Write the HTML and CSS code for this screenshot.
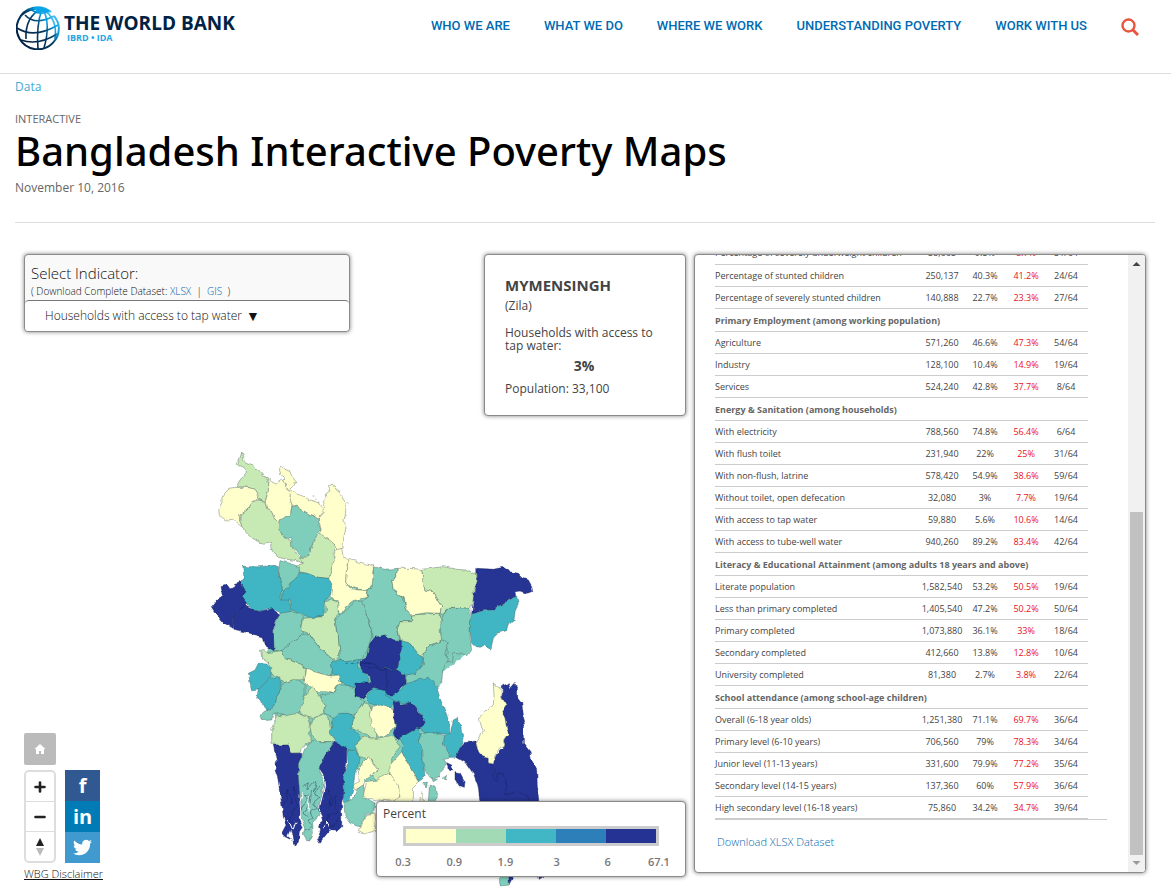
FILE: index.html
```html
<!DOCTYPE html>
<html lang="en">
<head>
<meta charset="utf-8">
<title>Bangladesh Interactive Poverty Maps</title>
<link rel="stylesheet" href="styles.css">
</head>
<body>
<header class="site-header">
  <a class="brand" href="#">
    <svg class="globe" viewBox="0 0 44 44" width="44" height="44" aria-hidden="true">
      <defs><linearGradient id="ink" x1="0.1" y1="0.8" x2="0.9" y2="0.1"><stop offset="0" stop-color="#002244"/><stop offset=".5" stop-color="#063c63"/><stop offset=".72" stop-color="#0099dc"/><stop offset="1" stop-color="#5cc8f5"/></linearGradient></defs>
      <g fill="none" stroke="url(#ink)" stroke-width="1.6">
        <path stroke-width="2" d="M35 6A21 21 0 1 0 42.500 19M38 10Q43 16 43 23"/>
        <path d="M25 3Q9 11 10 33M26 3Q20 20 22 43M27 3Q35 18 28 42M27 3Q42 13 39 33M25 3Q14 2 6 9"/>
        <path d="M9 9Q19 20 38 10M1 22Q18 33 42 19M5 34Q22 40 41 28M14 3Q24 10 35 5"/>
      </g>
      <path d="M17 2Q26-1 34 5Q30 8 26 6Q21 7 17 2z" fill="#0aa5e8"/>
    </svg>
    <span class="brand-text"><span class="brand-name">THE WORLD BANK</span><span class="brand-sub">IBRD • IDA</span></span>
  </a>
  <nav class="main-nav" aria-label="Main">
    <a href="#">WHO WE ARE</a><a href="#">WHAT WE DO</a><a href="#">WHERE WE WORK</a><a href="#">UNDERSTANDING POVERTY</a><a href="#">WORK WITH US</a>
    <button class="search" aria-label="Search"><svg viewBox="0 0 18 18" width="18" height="18" fill="none" stroke="#e8543c" stroke-width="2.4"><circle cx="7.500" cy="7.500" r="6"/><path stroke-width="3" d="M12 12l5 5"/></svg></button>
  </nav>
</header>
<main>
  <section class="title-block">
    <a class="crumb" href="#">Data</a>
    <p class="kicker">INTERACTIVE</p>
    <h1>Bangladesh Interactive Poverty Maps</h1>
    <p class="date">November 10, 2016</p>
  </section>
  <section class="dashboard">
    <div class="stage">
      <svg class="map" viewBox="-120 0 1170 1350" width="390" height="450" role="img" aria-label="Map of Bangladesh zilas">
        <defs><filter id="rough" x="-5%" y="-5%" width="110%" height="110%"><feTurbulence type="fractalNoise" baseFrequency="0.06" numOctaves="1" seed="4" result="n"/><feDisplacementMap in="SourceGraphic" in2="n" scale="15" xChannelSelector="R" yChannelSelector="G"/></filter></defs>
        <g filter="url(#rough)">
          <path class="t flat" d="M240 370L520 390L800 400L800 640L690 730L720 860L650 1000L500 1030L440 940L230 900L200 640L240 520z"/>
          <g>
            <path class="g" d="M125 38L131 50L131 62L145 70L160 78L165 88L178 90L187 98L190 108L200 112L207 135L205 155L195 184L175 180L168 170L173 160L165 148L150 143L130 140L108 142L120 120L133 105L140 95L132 82L112 76L118 60z"/>
            <path class="y" d="M108 142L150 143L165 148L173 160L168 178L155 186L148 204L135 215L120 225L118 240L128 262L112 250L100 240L85 243L70 236L58 225L56 208L66 190L66 172L78 155L90 145z"/>
            <path class="g" d="M175 180L195 184L200 205L215 215L225 238L238 248L240 265L250 290L270 300L285 330L310 370L290 362L260 358L235 352L222 340L212 325L213 305L190 310L175 305L150 290L132 270L120 245L120 225L135 215L148 204L155 186z"/>
            <path class="y" d="M207 118L215 125L228 132L245 120L256 132L262 150L272 155L270 175L276 195L272 225L255 232L240 250L225 238L215 215L200 205L196 184L205 155z"/>
            <path class="y" d="M235 90L245 78L252 88L270 95L275 108L288 125L280 140L272 148L290 162L310 168L325 178L345 185L360 190L365 200L372 215L360 228L357 240L345 230L330 224L310 212L290 200L276 195L270 175L272 155L262 148L258 132L248 120L258 115L240 102z"/>
            <path class="g" d="M363 280L380 295L395 300L405 315L402 345L408 360L395 380L388 415L355 412L320 400L298 395L292 375L310 370L300 350L325 350L338 310L345 290z"/>
            <path class="y" d="M365 210L375 200L370 185L380 170L378 158L390 150L385 140L397 132L405 145L420 155L430 175L438 200L436 225L432 240L438 260L432 290L425 325L415 330L408 325L405 315L395 305L375 290L360 282L363 265L355 245L360 230L372 218z"/>
            <path class="t" d="M276 198L290 200L310 212L330 224L345 230L357 242L355 250L363 270L345 290L338 310L325 350L305 352L290 330L275 320L275 295L250 290L238 265L240 240L255 232L272 225z"/>
            <path class="y" d="M408 330L425 325L430 355L445 358L440 380L437 430L445 445L480 450L505 452L500 472L465 480L437 500L420 528L412 500L415 482L400 480L388 465L390 440L386 415L395 380L402 365z"/>
            <path class="y" d="M445 358L475 365L500 372L522 378L518 400L520 430L505 450L480 448L445 440L437 430L440 380z"/>
            <path class="t" d="M240 362L262 368L285 372L298 380L298 395L290 412L270 430L258 455L245 450L240 420L235 395z"/>
            <path class="b" d="M128 378L145 380L180 380L205 378L222 376L235 380L235 395L240 420L248 450L240 480L262 475L272 495L270 530L240 520L238 515L215 510L200 505L180 515L160 510L135 490L125 470L130 440L120 430L132 415z"/>
            <path class="b" d="M298 398L320 400L355 412L388 416L398 440L395 468L375 480L370 530L330 532L300 520L275 510L272 480L243 480L250 460L270 430L285 420z"/>
            <path class="n" d="M63 440L80 435L90 450L100 445L105 430L120 425L135 450L125 470L140 490L135 500L110 515L97 535L100 565L70 548L50 525L34 500L50 480L70 465L65 450z"/>
            <path class="t" d="M240 520L270 515L295 520L310 530L305 560L310 580L280 605L250 630L222 632L220 580L225 550z"/>
            <path class="n" d="M97 535L110 515L135 497L160 510L180 515L215 503L238 525L222 550L220 580L222 632L192 615L187 592L150 580L102 568z"/>
            <path class="g" d="M395 480L412 485L415 510L405 540L410 580L415 590L420 640L405 660L380 640L355 620L330 585L305 570L310 535L370 530L380 510L375 485z"/>
            <path class="t" d="M410 535L440 510L470 480L490 485L495 510L510 550L515 590L500 635L480 660L440 665L420 658L420 640L415 590L408 560z"/>
          </g>
          <g transform="translate(480 300)">
            <path class="t" d="M40 80L75 88L112 85L110 115L95 120L100 145L115 165L130 175L140 210L155 225L155 245L120 245L112 270L120 300L100 300L75 285L60 292L40 295L30 250L15 210L5 185L22 170L25 148L35 145L40 110z"/>
            <path class="y" d="M112 85L150 85L185 88L190 120L195 150L220 155L232 180L245 200L240 220L200 218L155 225L140 210L133 175L115 165L100 145L95 120L110 115z"/>
            <path class="g" d="M187 88L250 80L290 88L320 90L335 100L350 95L350 125L340 150L340 180L330 208L290 205L265 205L250 222L240 222L245 200L232 180L220 155L195 150L188 120z"/>
            <path class="n" d="M350 85L400 88L430 82L450 95L475 100L490 115L505 120L515 138L518 155L500 160L480 153L465 155L468 175L445 180L430 190L400 210L370 212L335 222L340 180L345 140L352 110z"/>
            <path class="b" d="M470 168L475 190L465 215L462 240L445 255L440 272L410 280L400 295L392 330L375 315L360 322L345 320L335 310L330 270L330 240L335 222L370 212L400 210L430 190L445 180z"/>
            <path class="t" d="M265 205L330 208L332 240L330 290L335 330L325 345L300 342L280 340L278 365L258 365L265 340L255 320L240 295L245 270L240 245L250 225z"/>
            <path class="g" d="M155 225L240 220L243 245L240 270L245 300L215 315L195 330L190 350L175 345L160 320L145 308L125 305L112 270L120 245L155 245z"/>
            <path class="t" d="M265 305L255 325L262 365L248 390L245 430L235 442L220 430L200 415L165 425L140 435L140 405L170 395L190 375L190 350L200 325L220 315L245 300z"/>
            <path class="n" d="M30 310L45 292L75 285L100 300L125 302L125 335L115 365L110 390L85 385L60 385L40 375L0 370L5 358L20 350z"/>
            <path class="b" d="M125 302L145 308L160 320L175 345L190 355L185 380L165 400L140 405L125 398L108 390L115 365L125 335z"/>
            <path class="b" d="M20 470L40 445L70 450L85 465L105 470L100 490L90 505L60 500L30 490z"/>
          </g>
          <g transform="translate(90 570)">
            <path class="t" d="M155 60L190 35L215 15L235 10L265 50L290 70L310 90L305 120L300 138L270 130L230 120L215 105L190 95L165 85z"/>
            <path class="b" d="M55 130L75 120L85 100L110 102L125 118L118 145L100 165L85 180L65 182z"/>
            <path class="b" d="M85 180L118 145L145 140L155 160L150 185L140 200L135 230L110 240L100 220L80 205z"/>
            <path class="g" d="M92 60L115 68L155 62L165 85L190 95L215 105L228 120L225 148L205 150L190 150L160 158L145 140L125 135L125 110L110 95L95 85z"/>
            <path class="t" d="M160 158L190 150L205 150L225 165L225 195L215 235L205 250L185 260L165 258L145 248L130 250L125 270L95 272L90 255L110 240L135 230L140 200L150 185z"/>
            <path class="b" d="M305 95L330 88L350 95L390 88L380 110L400 125L415 140L420 160L380 180L370 172L350 165L330 155L320 135L303 130z"/>
            <path class="t" d="M270 195L310 190L325 165L350 165L375 175L385 200L400 215L385 240L375 255L340 250L310 265L285 250L285 225L272 210z"/>
            <path class="y" d="M230 118L270 130L300 138L325 135L332 160L320 168L310 190L285 185L255 185L240 175L222 155z"/>
            <path class="g" d="M245 170L260 185L270 205L285 225L280 250L250 265L230 262L210 245L220 215L225 195z"/>
            <path class="g" d="M135 255L165 258L205 250L235 262L245 290L235 310L245 335L215 350L210 368L180 370L170 350L125 340L125 300L135 280z"/>
            <path class="g" d="M250 265L280 252L300 270L305 300L320 335L285 335L262 335L245 315L240 290z"/>
            <path class="b" d="M310 265L325 250L355 250L375 260L362 290L390 320L390 350L365 362L345 355L320 335L300 310z"/>
            <path class="g" d="M400 215L420 225L425 260L440 290L440 330L420 330L415 315L390 305L360 295L375 260L385 240z"/>
            <path class="g" d="M375 345L400 320L440 328L490 315L510 350L485 385L485 420L465 450L440 450L425 435L440 420L425 390L390 380z"/>
            <path class="y" d="M425 230L450 222L470 228L490 240L495 290L480 310L460 325L445 320L425 285L418 255z"/>
            <path class="n" d="M130 345L175 345L185 370L215 370L215 400L205 420L210 470L208 500L216 540L205 560L218 590L208 605L205 640L195 648L190 620L180 600L172 618L185 630L165 620L155 610L168 585L160 560L155 520L148 480L145 450L135 420L140 395z"/>
            <path class="t" d="M245 335L310 335L300 360L275 400L268 420L282 450L275 480L280 500L265 525L270 550L248 580L250 610L240 632L230 632L220 615L225 590L212 555L216 525L208 480L205 440L205 400L215 380L225 355z"/>
            <path class="n" d="M315 335L350 355L350 400L340 440L345 480L335 520L335 590L320 605L300 600L290 612L270 637L262 625L272 600L265 590L278 570L266 540L280 480L285 440L268 415L290 370z"/>
            <path class="b" d="M350 360L380 362L390 385L385 410L375 430L370 470L360 510L340 520L342 470L340 440L355 400z"/>
            <path class="t" d="M400 462L405 500L435 520L430 550L410 550L390 590L360 580L345 560L342 520L370 505L380 480z"/>
            <path class="y" d="M400 395L415 380L430 400L442 415L425 435L410 445L400 465L375 480L370 465L385 455L382 425z"/>
            <path class="y" d="M410 455L440 450L470 435L490 430L508 470L508 515L440 510L400 500L405 475z"/>
            <path class="y" d="M410 555L435 548L440 600L400 612L385 605L395 585z"/>
            <path class="vein" d="M222 470L235 455L230 480L245 460L260 455L250 485L268 465L255 495L270 500L248 520L262 535L240 545L250 565L235 570L245 590L225 600M215 530L232 510L220 495L240 500L235 530L222 550L235 560M245 480L240 520"/>
            <path class="vein" d="M165 520L175 480L185 520L192 470L200 530L178 560L195 590M285 500L300 480L298 530L315 500L320 550L290 560L305 590L328 560M275 580L300 560"/>
            <path class="water" d="M280 445L284 470L270 525L268 550M218 490L210 515L214 570M174 570L188 602L198 575M238 500L234 545M282 592L290 570L300 600"/>
          </g>
          <g transform="translate(450 690)">
            <path class="b" d="M105 75L130 65L150 60L165 45L200 30L235 22L260 50L270 85L285 120L297 155L300 192L260 192L225 185L210 175L228 160L215 140L205 115L185 100L160 98L130 90z"/>
            <path class="n" d="M30 -25L70 -18L90 -5L140 0L165 15L168 42L150 50L145 65L130 75L115 75L100 60L70 55L55 65L40 85L15 80L15 40L35 38L65 40L60 15L35 5z"/>
            <path class="vein" d="M-10 -20L30 -18L60 -8L108 0L112 30L108 55"/>
            <path class="n" d="M130 95L145 92L155 103L185 97L200 115L210 135L228 155L222 170L200 178L175 190L150 208L135 200L130 190L138 165L128 140L132 115z"/>
            <path class="b" d="M200 175L215 190L205 210L215 230L215 260L222 290L225 322L205 335L190 310L165 265L155 245L160 225L150 205L175 190z"/>
            <path class="t" d="M215 188L235 185L260 192L285 195L280 225L290 235L300 262L282 265L290 285L275 300L270 320L240 325L230 310L220 290L218 240L205 215z"/>
            <path class="b" d="M285 195L300 192L310 150L320 145L332 165L335 190L342 215L330 235L320 262L300 262L290 235L280 222z"/>
            <path class="n" d="M457 50L475 38L482 55L495 40L502 55L503 85L515 100L520 130L527 155L520 165L520 220L540 245L545 270L560 300L562 350L567 400L550 415L410 415L390 400L385 350L370 310L350 280L320 262L330 235L345 218L378 213L385 245L415 262L415 278L430 282L440 250L465 225L462 210L475 190L468 165L465 145L452 122L468 105L457 80z"/>
            <path class="y" d="M430 38L437 50L452 52L455 80L468 105L455 125L465 145L468 165L475 190L460 210L465 225L445 235L435 255L430 282L415 278L415 262L390 255L378 220L400 185L388 145L410 120L430 105L432 75z"/>
            <path class="vein" d="M425 285L435 300L430 325L440 335L445 310L455 310L468 330L468 375L500 365L530 375L540 400"/>
            <path class="n" d="M290 278L305 285L308 300L295 298zM315 305L330 308L345 335L343 355L325 348L315 330zM475 610L487 625L478 642zM562 605L582 618L568 628z"/>
            <path class="t" d="M218 340L232 336L230 350zM238 345L255 352L262 380L255 400L235 400zM280 324L290 316L286 330zM245 325L262 328L250 335zM447 605L475 605L478 645L450 648z"/>
            <path class="y" d="M155 245L165 265L190 310L205 335L190 350L190 400L120 400L150 380L145 345L120 315L120 285zM212 365L218 368L220 395L210 395z"/>
          </g>
          <path class="speck" d="M338 168h5M346 178h4M440 188h6M325 182h4M280 128h8"/>
        </g>
      </svg>
      <section class="panel indicator">
        <div class="indicator-head">
          <label for="indicator">Select Indicator:</label>
          <p>( Download Complete Dataset: <a href="#">XLSX</a> &nbsp;|&nbsp; <a href="#">GIS</a> &nbsp;)</p>
        </div>
        <div class="indicator-pick"><select id="indicator"><option>Households with access to tap water</option></select><span aria-hidden="true">▼</span></div>
      </section>
      <section class="panel info">
        <h2>MYMENSINGH</h2>
        <p class="level">(Zila)</p>
        <p class="measure">Households with access to tap water:</p>
        <p class="value">3%</p>
        <p>Population: 33,100</p>
      </section>
      <div class="controls">
        <button class="home" aria-label="Reset view"><svg viewBox="0 0 12 12" width="12" height="12" fill="#fff"><path d="M6 1l5.500 5H10v5H7V8H5v3H2V6H.5z"/></svg></button>
        <div class="control-row">
          <div class="zoom">
            <button aria-label="Zoom in"><svg viewBox="0 0 12 12" width="12" height="12"><path d="M1.500 6h9M6 1.500v9" stroke="#222" stroke-width="2.600" stroke-linecap="round"/></svg></button>
            <button aria-label="Zoom out"><svg viewBox="0 0 12 12" width="12" height="12"><path d="M1.500 6h9" stroke="#222" stroke-width="2.600" stroke-linecap="round"/></svg></button>
            <button aria-label="Reset north"><svg viewBox="0 0 10 18" width="10" height="18"><path d="M5 0l4 8H1z" fill="#222"/><path d="M5 18l4-8H1z" fill="#bbb"/></svg></button>
          </div>
          <div class="social">
            <a class="fb" href="#" aria-label="Facebook">f</a>
            <a class="li" href="#" aria-label="LinkedIn">in</a>
            <a class="tw" href="#" aria-label="Twitter"><svg viewBox="0 0 24 24" width="19" height="19" fill="#fff"><path d="M23.950 4.570a10 10 0 0 1-2.820.77 4.960 4.960 0 0 0 2.160-2.720c-.95.55-2 .95-3.130 1.180a4.920 4.920 0 0 0-8.380 4.480C7.690 8.090 4.070 6.130 1.640 3.160a4.820 4.820 0 0 0-.66 2.480c0 1.710.87 3.210 2.190 4.100a4.900 4.900 0 0 1-2.230-.62v.06a4.920 4.920 0 0 0 3.950 4.830 5 5 0 0 1-2.210.08 4.940 4.940 0 0 0 4.600 3.420A9.870 9.870 0 0 1 0 19.540a13.990 13.990 0 0 0 7.560 2.210c9.050 0 14-7.500 14-13.980v-.64a10 10 0 0 0 2.390-2.560z"/></svg></a>
          </div>
        </div>
        <a class="disclaimer" href="#">WBG Disclaimer</a>
      </div>
      <section class="panel legend">
        <h3>Percent</h3>
        <div class="ramp"><i class="c1"></i><i class="c2"></i><i class="c3"></i><i class="c4"></i><i class="c5"></i></div>
        <div class="ticks"><span>0.3</span><span>0.9</span><span>1.9</span><span>3</span><span>6</span><span>67.1</span></div>
      </section>
    </div>
    <section class="panel data">
      <div class="data-body">
        <table>
          <colgroup><col><col class="w-num"><col class="w-pct"><col class="w-red"><col class="w-rank"></colgroup>
          <tbody>
            <tr><td>Percentage of severely underweight children</td><td>58,665</td><td>9.5%</td><td>8.7%</td><td>51/64</td></tr>
            <tr><td>Percentage of stunted children</td><td>250,137</td><td>40.3%</td><td>41.2%</td><td>24/64</td></tr>
            <tr><td>Percentage of severely stunted children</td><td>140,888</td><td>22.7%</td><td>23.3%</td><td>27/64</td></tr>
            <tr><th colspan="5">Primary Employment (among working population)</th></tr>
            <tr><td>Agriculture</td><td>571,260</td><td>46.6%</td><td>47.3%</td><td>54/64</td></tr>
            <tr><td>Industry</td><td>128,100</td><td>10.4%</td><td>14.9%</td><td>19/64</td></tr>
            <tr><td>Services</td><td>524,240</td><td>42.8%</td><td>37.7%</td><td>8/64</td></tr>
            <tr><th colspan="5">Energy &amp; Sanitation (among households)</th></tr>
            <tr><td>With electricity</td><td>788,560</td><td>74.8%</td><td>56.4%</td><td>6/64</td></tr>
            <tr><td>With flush toilet</td><td>231,940</td><td>22%</td><td>25%</td><td>31/64</td></tr>
            <tr><td>With non-flush, latrine</td><td>578,420</td><td>54.9%</td><td>38.6%</td><td>59/64</td></tr>
            <tr><td>Without toilet, open defecation</td><td>32,080</td><td>3%</td><td>7.7%</td><td>19/64</td></tr>
            <tr><td>With access to tap water</td><td>59,880</td><td>5.6%</td><td>10.6%</td><td>14/64</td></tr>
            <tr><td>With access to tube-well water</td><td>940,260</td><td>89.2%</td><td>83.4%</td><td>42/64</td></tr>
            <tr><th colspan="5">Literacy &amp; Educational Attainment (among adults 18 years and above)</th></tr>
            <tr><td>Literate population</td><td>1,582,540</td><td>53.2%</td><td>50.5%</td><td>19/64</td></tr>
            <tr><td>Less than primary completed</td><td>1,405,540</td><td>47.2%</td><td>50.2%</td><td>50/64</td></tr>
            <tr><td>Primary completed</td><td>1,073,880</td><td>36.1%</td><td>33%</td><td>18/64</td></tr>
            <tr><td>Secondary completed</td><td>412,660</td><td>13.8%</td><td>12.8%</td><td>10/64</td></tr>
            <tr><td>University completed</td><td>81,380</td><td>2.7%</td><td>3.8%</td><td>22/64</td></tr>
            <tr><th colspan="5">School attendance (among school-age children)</th></tr>
            <tr><td>Overall (6-18 year olds)</td><td>1,251,380</td><td>71.1%</td><td>69.7%</td><td>36/64</td></tr>
            <tr><td>Primary level (6-10 years)</td><td>706,560</td><td>79%</td><td>78.3%</td><td>34/64</td></tr>
            <tr><td>Junior level (11-13 years)</td><td>331,600</td><td>79.9%</td><td>77.2%</td><td>35/64</td></tr>
            <tr><td>Secondary level (14-15 years)</td><td>137,360</td><td>60%</td><td>57.9%</td><td>36/64</td></tr>
            <tr><td>High secondary level (16-18 years)</td><td>75,860</td><td>34.2%</td><td>34.7%</td><td>39/64</td></tr>
          </tbody>
        </table>
        <p class="download"><a href="#">Download XLSX Dataset</a></p>
      </div>
      <div class="scrollbar" aria-hidden="true">
        <svg viewBox="0 0 17 17" width="17" height="17"><path d="M4.500 11l4-4 4 4z" fill="#444"/></svg>
        <span class="thumb"></span>
        <svg viewBox="0 0 17 17" width="17" height="17"><path d="M4.500 6l4 4 4-4z" fill="#999"/></svg>
      </div>
    </section>
  </section>
</main>
</body>
</html>
```
FILE: styles.css
```css
* { box-sizing: border-box; }
body { margin: 0; background: #fff; color: #444; font: 12px/16px "Open Sans", sans-serif; }
h1, h2, h3, p { margin: 0; }
a { color: #1a7ab8; text-decoration: none; }
button { padding: 0; border: 0; background: none; font: inherit; }

.site-header { display: flex; justify-content: space-between; align-items: flex-start; height: 74px; padding: 6px 32px 0 16px; border-bottom: 1px solid #ddd; }
.brand { display: flex; gap: 4px; }
.brand-text { display: flex; flex-direction: column; padding-top: 7px; }
.brand-name { color: #002244; font-size: 19px; font-weight: 700; line-height: 20px; }
.brand-sub { padding-left: 3px; color: #1fa6e4; font-size: 9px; font-weight: 700; line-height: 10px; }
.main-nav { display: flex; align-items: center; gap: 34px; padding-top: 10px; }
.main-nav a { color: #006bb3; font: 500 13px/20px Roboto, sans-serif; }
.search { display: flex; padding-top: 2px; }

.title-block { display: flex; flex-direction: column; align-items: flex-start; margin: 0 16px 0 15px; padding: 4px 0 25px; border-bottom: 1px solid #ddd; }
.crumb { color: #3fa9d5; line-height: 18px; }
.kicker { margin-top: 15px; color: #666; font-size: 11px; }
h1 { margin-bottom: 4px; color: #000; font-family: "Noto Sans", "Open Sans", sans-serif; font-size: 40px; font-weight: 500; line-height: 48px; }
.date { color: #666; line-height: 18px; }

.dashboard { display: grid; grid-template-columns: minmax(0, 1fr) 452px; gap: 8px; align-items: start; padding: 31px 25px 0 24px; }
.stage { display: grid; grid-template-rows: 636px; }
.stage > * { grid-area: 1 / 1; }
.panel { border: 1px solid #8a8a8a; border-radius: 4px; background: #fff; box-shadow: 0 0 4px rgba(0, 0, 0, .5); }

.map { align-self: end; justify-self: center; }
.map path { stroke: #4a5a55; stroke-opacity: .6; stroke-width: 2; stroke-linejoin: round; }
.map .flat { stroke: none; }
.map .y { fill: #ffffcc; }
.map .g { fill: #c7e9b4; }
.map .t { fill: #7fcdbb; }
.map .b { fill: #41b6c4; }
.map .n { fill: #253494; stroke: #111a50; }
.map .vein { fill: none; stroke: #16224f; }
.map .water { fill: none; stroke: #fff; stroke-width: 3; stroke-opacity: 1; }
.map .speck { stroke: #a9a984; stroke-width: 4; }

.indicator { align-self: start; justify-self: start; width: 326px; background: #f9f9f9; color: #111; font-weight: 300; }
.indicator a, .download a { color: #0068ad; }
.indicator-head { padding: 7px 6px 1px; }
.indicator-head label { display: block; font-size: 15px; line-height: 22px; }
.indicator-head p { font-size: 10px; line-height: 15px; }
.indicator-pick { display: flex; align-items: center; gap: 4px; height: 31px; padding: 0 20px; border-top: 1px solid #777; border-radius: 4px; background: #fff; }
.indicator-pick span { font-size: 14px; }
select { appearance: none; padding: 0; border: 0; background: none; color: #111; font: inherit; }

.info { align-self: start; justify-self: end; width: 202px; padding: 17px 20px 18px; }
.info h2 { font-size: 15px; font-weight: 700; line-height: 26px; }
.level { margin-bottom: 12px; }
.measure { line-height: 13px; }
.value { margin: 5px 0 6px; padding-right: 2px; font-size: 14px; font-weight: 700; line-height: 18px; text-align: center; }

.controls { display: flex; flex-direction: column; align-items: flex-start; align-self: end; justify-self: start; margin-bottom: 8px; }
.home { display: grid; place-items: center; width: 32px; height: 32px; border-radius: 2px; background: #bbb; }
.control-row { display: flex; gap: 9px; margin: 5px 0 3px; }
.zoom { display: flex; flex-direction: column; width: 32px; border: 2px solid #ddd; border-radius: 5px; }
.zoom button { display: grid; flex: 1; place-items: center; }
.zoom button + button { border-top: 1px solid #ddd; }
.social { display: flex; flex-direction: column; width: 35px; }
.social a { display: grid; place-items: center; height: 31px; color: #fff; font-size: 20px; font-weight: 700; line-height: 28px; }
.fb { background: #305891; }
.li { background: #007bb6; }
.tw { background: #4099cf; }
.disclaimer { color: #111; font-size: 11px; font-weight: 300; text-decoration: underline; }

.legend { align-self: end; justify-self: end; width: 310px; margin-bottom: 13px; padding: 4px 6px 6px; }
.legend h3 { font-size: 12px; font-weight: 400; }
.ramp { display: flex; height: 20px; margin: 4px 20px 0; border: 3px solid #ccc; }
.ramp i { flex: 1; }
.c1 { background: #ffffcc; }
.c2 { background: #a1dab4; }
.c3 { background: #41b6c4; }
.c4 { background: #2c7fb8; }
.c5 { background: #253494; }
.ticks { display: flex; justify-content: space-between; margin-top: 8px; color: #777; font-size: 11px; font-weight: 600; }
.ticks span { width: 40px; text-align: center; }

.data { display: flex; justify-content: space-between; height: 619px; overflow: hidden; }
.data-body { display: flex; flex-direction: column; justify-content: flex-end; width: 412px; padding-left: 20px; overflow: hidden; }
table { width: 373px; border-collapse: collapse; table-layout: fixed; font-size: 9px; line-height: 12px; }
.w-num { width: 46px; }
.w-pct { width: 40px; }
.w-red { width: 42px; }
.w-rank { width: 41px; }
td, th { height: 22px; padding: 0; border-bottom: 1px solid #ccc; text-align: center; white-space: nowrap; }
th { height: 23px; padding-top: 1px; color: #666; font-weight: 700; text-align: left; }
td:first-child { text-align: left; }
td:nth-child(4) { color: #ea1024; }
td:last-child { padding-right: 3px; }
.download { padding: 14px 2px 22px; border-top: 1px solid #ccc; font-size: 11px; font-weight: 300; }
.scrollbar { display: flex; flex-direction: column; align-items: center; width: 17px; background: #f1f1f1; }
.thumb { width: 13px; height: 343px; margin-top: auto; background: #c1c1c1; }
```
